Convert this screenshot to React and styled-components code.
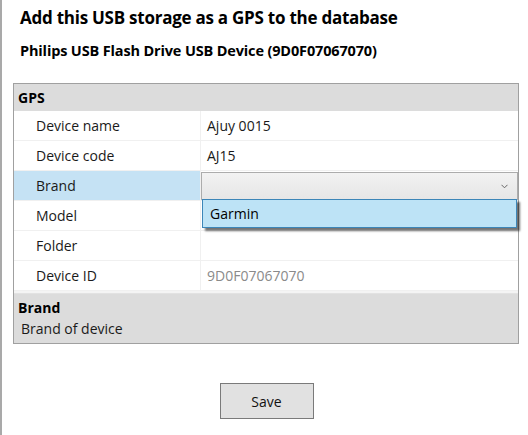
import React from 'react';
import styled, { createGlobalStyle } from 'styled-components';

const Global = createGlobalStyle`
  html, body {
    margin: 0;
    padding: 0;
    background: #ffffff;
  }
  body {
    font-family: "Open Sans", "Noto Sans", sans-serif;
    color: #000;
  }
`;

const Window = styled.div`
  width: 528px;
  height: 435px;
  box-sizing: border-box;
  border-left: 2px solid #a9a9a9;
  padding: 6px 8px 0 11px;
  display: flex;
  flex-direction: column;
`;

const Title = styled.h1`
  margin: 0 0 0 7px;
  font-size: 17px;
  font-weight: 700;
  line-height: 24px;
  letter-spacing: -0.25px;
`;

const Subtitle = styled.h2`
  margin: 11px 0 0 7px;
  font-size: 14.5px;
  font-weight: 700;
  line-height: 20px;
  letter-spacing: -0.15px;
`;

const Grid = styled.div`
  margin-top: 22px;
  width: 506px;
  box-sizing: border-box;
  border: 1px solid #a0a0a0;
  display: flex;
  flex-direction: column;
`;

const Category = styled.div`
  height: 27px;
  background: #dcdcdc;
  font-weight: 700;
  font-size: 14px;
  display: flex;
  align-items: center;
  padding-left: 4px;
`;

const Rows = styled.div`
  display: flex;
  flex-direction: column;
`;

const Row = styled.div`
  position: relative;
  height: 29px;
  display: grid;
  grid-template-columns: 187px 1fr;
  border-bottom: 1px solid #f0f0f0;
  font-size: 14px;
`;

const Label = styled.div`
  display: flex;
  align-items: center;
  padding-left: 22px;
  background: ${p => (p.$selected ? '#c5e2f4' : '#ffffff')};
  border-right: 1px solid #f0f0f0;
  color: #1a1a1a;
`;

const Value = styled.div`
  display: flex;
  align-items: center;
  padding-left: 6px;
  color: ${p => (p.$muted ? '#8a8a8a' : '#1a1a1a')};
`;

const Combo = styled.div`
  display: flex;
  align-items: center;
  justify-content: flex-end;
  margin: 1px 0 0 0;
  box-sizing: border-box;
  border: 1px solid #acacac;
  background: linear-gradient(#f2f2f2, #e6e6e6);
  padding-right: 9px;
`;

const DropList = styled.div`
  position: absolute;
  left: 188px;
  top: 28px;
  width: 315px;
  height: 29px;
  box-sizing: border-box;
  border: 1px solid #3c86b8;
  background: #bde3f6;
  box-shadow: 3px 3px 2px rgba(0, 0, 0, 0.55);
  display: flex;
  align-items: center;
  padding-left: 7px;
  font-size: 14px;
  z-index: 2;
`;

const Splitter = styled.div`
  height: 2px;
  background: #f4f4f4;
  border-bottom: 1px solid #e2e2e2;
`;

const Help = styled.div`
  height: 49px;
  background: #dcdcdc;
  padding: 4px 4px 0;
  box-sizing: border-box;
  font-size: 14px;
`;

const HelpTitle = styled.div`
  font-weight: 700;
  line-height: 20px;
`;

const HelpText = styled.div`
  margin-top: 1px;
  padding-left: 3px;
  line-height: 20px;
  color: #1a1a1a;
`;

const Footer = styled.div`
  display: flex;
  justify-content: center;
  padding-top: 39px;
`;

const Button = styled.button`
  width: 94px;
  height: 36px;
  background: #e1e1e1;
  border: 1px solid #7a7a7a;
  font-family: "Open Sans", "Noto Sans", sans-serif;
  font-size: 14px;
  color: #111;
  padding: 0;
`;

const Chevron = () => (
  <svg width="7" height="5" viewBox="0 0 7 5">
    <path d="M0.5 0.8 L3.5 3.8 L6.5 0.8" fill="none" stroke="#666" strokeWidth="1" />
  </svg>
);

const rows = [
  { label: 'Device name', value: 'Ajuy 0015' },
  { label: 'Device code', value: 'AJ15' },
  { label: 'Brand', combo: true },
  { label: 'Model', value: '' },
  { label: 'Folder', value: '' },
  { label: 'Device ID', value: '9D0F07067070', muted: true },
];

export default function App() {
  return (
    <>
      <Global />
      <Window>
        <Title>Add this USB storage as a GPS to the database</Title>
        <Subtitle>Philips USB Flash Drive USB Device (9D0F07067070)</Subtitle>
        <Grid>
          <Category>GPS</Category>
          <Rows>
            {rows.map(r => (
              <Row key={r.label}>
                <Label $selected={r.combo}>{r.label}</Label>
                {r.combo ? (
                  <Combo>
                    <Chevron />
                  </Combo>
                ) : (
                  <Value $muted={r.muted}>{r.value}</Value>
                )}
                {r.combo && <DropList>Garmin</DropList>}
              </Row>
            ))}
          </Rows>
          <Splitter />
          <Help>
            <HelpTitle>Brand</HelpTitle>
            <HelpText>Brand of device</HelpText>
          </Help>
        </Grid>
        <Footer>
          <Button>Save</Button>
        </Footer>
      </Window>
    </>
  );
}
